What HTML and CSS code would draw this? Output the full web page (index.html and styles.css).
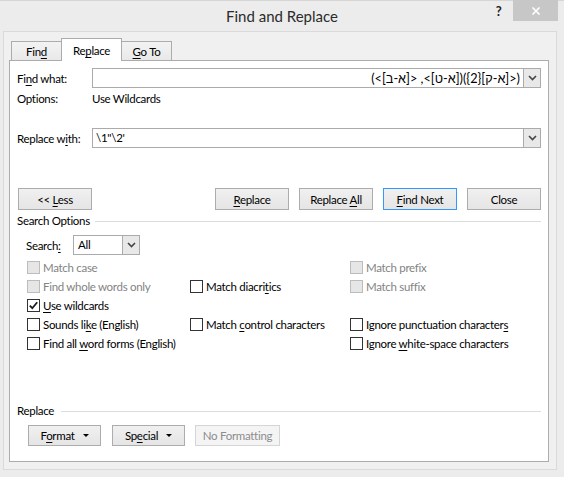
FILE: index.html
```html
<!DOCTYPE html>
<html lang="en">
<head>
    <meta charset="UTF-8">
    <title>Find and Replace</title>
    <link rel="stylesheet" href="styles.css">
</head>
<body>
    <div class="window">
        <header class="titlebar">
            <h1 class="title">Find and Replace</h1>
            <div class="caption-buttons">
                <button class="help-button">?</button>
                <button class="close-button">
                    <svg width="10" height="8" viewBox="0 0 10 8" fill="none" stroke="#fff" stroke-width="1.6">
                        <path d="M1.5 0.5 L8.5 7.5 M8.5 0.5 L1.5 7.5"/>
                    </svg>
                </button>
            </div>
        </header>

        <div class="client">
            <div class="tabs">
                <button class="tab tab-find">Fin<u>d</u></button>
                <button class="tab tab-active">Re<u>p</u>lace</button>
                <button class="tab tab-goto"><u>G</u>o To</button>
            </div>

            <div class="panel">
                <div class="field-row">
                    <label class="field-label">Fi<u>n</u>d what:</label>
                    <div class="combo">
                        <span class="combo-text" dir="rtl">(&lt;[א-ק]{2})([א-ט]&gt;, &lt;[א-ב]&gt;)</span>
                        <span class="combo-arrow">
                            <svg width="9" height="6" viewBox="0 0 9 6" fill="none" stroke="#444" stroke-width="1.6">
                                <polyline points="1,1 4.5,4.5 8,1"/>
                            </svg>
                        </span>
                    </div>
                </div>

                <div class="options-row">
                    <span class="field-label">Options:</span>
                    <span>Use Wildcards</span>
                </div>

                <div class="field-row replace-row">
                    <label class="field-label">Replace w<u>i</u>th:</label>
                    <div class="combo">
                        <span class="combo-text">\1"\2'</span>
                        <span class="combo-arrow">
                            <svg width="9" height="6" viewBox="0 0 9 6" fill="none" stroke="#444" stroke-width="1.6">
                                <polyline points="1,1 4.5,4.5 8,1"/>
                            </svg>
                        </span>
                    </div>
                </div>

                <div class="button-row">
                    <button class="btn btn-less">&lt;&lt; <u>L</u>ess</button>
                    <button class="btn"><u>R</u>eplace</button>
                    <button class="btn">Replace <u>A</u>ll</button>
                    <button class="btn btn-default"><u>F</u>ind Next</button>
                    <button class="btn">Close</button>
                </div>

                <div class="group-title">Search Options</div>

                <div class="search-row">
                    <label class="search-label">Search<u>:</u></label>
                    <div class="combo combo-small">
                        <span class="combo-text">All</span>
                        <span class="combo-arrow">
                            <svg width="9" height="6" viewBox="0 0 9 6" fill="none" stroke="#444" stroke-width="1.6">
                                <polyline points="1,1 4.5,4.5 8,1"/>
                            </svg>
                        </span>
                    </div>
                </div>

                <div class="checks">
                    <label class="check disabled"><span class="box"></span><span>Match case</span></label>
                    <span></span>
                    <label class="check disabled"><span class="box"></span><span>Match prefix</span></label>

                    <label class="check disabled"><span class="box"></span><span>Find whole words only</span></label>
                    <label class="check"><span class="box"></span><span>Match diacri<u>t</u>ics</span></label>
                    <label class="check disabled"><span class="box"></span><span>Match suffix</span></label>

                    <label class="check">
                        <span class="box">
                            <svg width="11" height="11" viewBox="0 0 11 11" fill="none" stroke="#1a1a1a" stroke-width="1.8">
                                <path d="M1.8 5.6 L4.3 8.2 L9.2 2.2"/>
                            </svg>
                        </span>
                        <span><u>U</u>se wildcards</span>
                    </label>
                    <span></span>
                    <span></span>

                    <label class="check"><span class="box"></span><span>Sounds li<u>k</u>e (English)</span></label>
                    <label class="check"><span class="box"></span><span>Match <u>c</u>ontrol characters</span></label>
                    <label class="check"><span class="box"></span><span>Ignore punctuation character<u>s</u></span></label>

                    <label class="check"><span class="box"></span><span>Find all <u>w</u>ord forms (English)</span></label>
                    <span></span>
                    <label class="check"><span class="box"></span><span>Ignore <u>w</u>hite-space characters</span></label>
                </div>

                <div class="group-title group-replace">Replace</div>

                <div class="bottom-buttons">
                    <button class="btn btn-menu"><span>F<u>o</u>rmat</span><span class="caret"></span></button>
                    <button class="btn btn-menu btn-special"><span>Sp<u>e</u>cial</span><span class="caret"></span></button>
                    <button class="btn btn-disabled">No Formatting</button>
                </div>
            </div>
        </div>
    </div>
</body>
</html>
```

FILE: styles.css
```css
* {
    margin: 0;
    padding: 0;
    box-sizing: border-box;
}

body {
    width: 564px;
    height: 477px;
    overflow: hidden;
    font-family: "Lato", "Liberation Sans", "DejaVu Sans", sans-serif;
    font-size: 11.5px;
    letter-spacing: -0.3px;
    color: #000;
    background-color: #ececec;
}

button {
    font: inherit;
    letter-spacing: inherit;
    color: inherit;
    background: none;
    border: none;
}

u {
    text-underline-offset: 2px;
}

.window {
    width: 564px;
    height: 477px;
    display: flex;
    flex-direction: column;
    background-color: #ececec;
    border-top: 1px solid #d6d6d6;
}

/* title bar */
.titlebar {
    height: 30px;
    display: grid;
    grid-template-columns: 1fr auto 1fr;
    align-items: start;
}

.title {
    grid-column: 2;
    font-size: 15px;
    font-weight: normal;
    letter-spacing: 0;
    color: #2b2b2b;
    line-height: 30px;
}

.caption-buttons {
    grid-column: 3;
    justify-self: end;
    display: flex;
    margin-right: 6px;
    margin-top: -1px;
}

.help-button {
    width: 29px;
    height: 21px;
    font-size: 13px;
    font-weight: bold;
    color: #222;
    line-height: 22px;
}

.close-button {
    width: 45px;
    height: 21px;
    background-color: #c7c7c7;
    display: flex;
    align-items: center;
    justify-content: center;
}

/* client area */
.client {
    flex: 1;
    margin: 0 7px 7px 3px;
    border: 1px solid #dadada;
    background-color: #f0f0f0;
    padding: 6px 7px 7px 5px;
    display: flex;
    flex-direction: column;
}

.tabs {
    height: 22px;
    display: flex;
    align-items: flex-end;
    padding-left: 2px;
}

.tab {
    height: 19px;
    border: 1px solid #acacac;
    border-bottom: none;
    background: linear-gradient(#f3f3f3, #e9e9e9);
    line-height: 17px;
    text-align: center;
}

.tab + .tab {
    margin-left: -1px;
}

.tab-find {
    width: 51px;
}

.tab-goto {
    width: 51px;
}

.tab-active {
    width: 61px;
    height: 23px;
    margin-bottom: -1px;
    background: #fff;
    line-height: 19px;
    position: relative;
    z-index: 1;
}

.panel {
    flex: 1;
    background-color: #fff;
    border: 1px solid #acacac;
    padding: 7px 7px 0 7px;
    display: flex;
    flex-direction: column;
}

.field-row {
    height: 20px;
    display: flex;
    align-items: center;
}

.field-label {
    width: 75px;
    flex-shrink: 0;
}

.options-row {
    height: 20px;
    display: flex;
    align-items: center;
}

.replace-row {
    margin-top: 20px;
}

.combo {
    flex: 1;
    height: 20px;
    border: 1px solid #ababab;
    display: flex;
    background-color: #fff;
}

.combo-text {
    flex: 1;
    padding: 0 3px;
    line-height: 18px;
    white-space: nowrap;
    overflow: hidden;
}

.combo-text[dir="rtl"] {
    font-size: 12.7px;
    letter-spacing: 0;
}

.combo-arrow {
    width: 17px;
    border-left: 1px solid #ababab;
    background-color: #e8e8e8;
    display: flex;
    align-items: center;
    justify-content: center;
}

.combo-small {
    flex: none;
    width: 67px;
}

.combo-small .combo-text {
    padding-left: 4px;
}

/* buttons */
.button-row {
    margin-top: 40px;
    display: flex;
}

.btn {
    width: 74px;
    height: 22px;
    border: 1px solid #acacac;
    background: linear-gradient(#f0f0f0, #e5e5e5);
    margin-left: 10px;
}

.btn-less {
    margin-left: 1px;
    margin-right: auto;
}

.btn-default {
    border-color: #3399ff;
}

.group-title {
    margin-top: 3px;
    height: 16px;
    line-height: 16px;
    display: flex;
    align-items: center;
    gap: 5px;
}

.group-title::after {
    content: "";
    flex: 1;
    border-top: 1px solid #dcdcdc;
}

.group-replace {
    margin-top: 50px;
    gap: 7px;
}

.search-row {
    margin-top: 6px;
    height: 20px;
    padding-left: 9px;
    display: flex;
    align-items: center;
}

.search-label {
    width: 47px;
}

/* checkboxes */
.checks {
    margin-top: 3px;
    padding-left: 10px;
    display: grid;
    grid-template-columns: 163px 160px 1fr;
    grid-auto-rows: 19px;
}

.check {
    display: flex;
    align-items: center;
    gap: 3px;
    white-space: nowrap;
}

.box {
    width: 13px;
    height: 13px;
    border: 1px solid #333;
    background-color: #fff;
    display: flex;
    align-items: center;
    justify-content: center;
    flex-shrink: 0;
}

.check.disabled {
    color: #838383;
}

.check.disabled .box {
    border-color: #bcbcbc;
    background-color: #e6e6e6;
}

.bottom-buttons {
    margin-top: 6px;
    padding-left: 11px;
    display: flex;
}

.bottom-buttons .btn {
    height: 21px;
}

.btn-menu {
    width: 73px;
    margin-left: 0;
    display: flex;
    align-items: center;
    justify-content: center;
    gap: 8px;
}

.btn-special {
    margin-left: 11px;
}

.caret {
    border-left: 3px solid transparent;
    border-right: 3px solid transparent;
    border-top: 3px solid #000;
}

.btn-disabled {
    width: 85px;
    background: #f4f4f4;
    border-color: #d5d5d5;
    color: #8c8c8c;
}
```
